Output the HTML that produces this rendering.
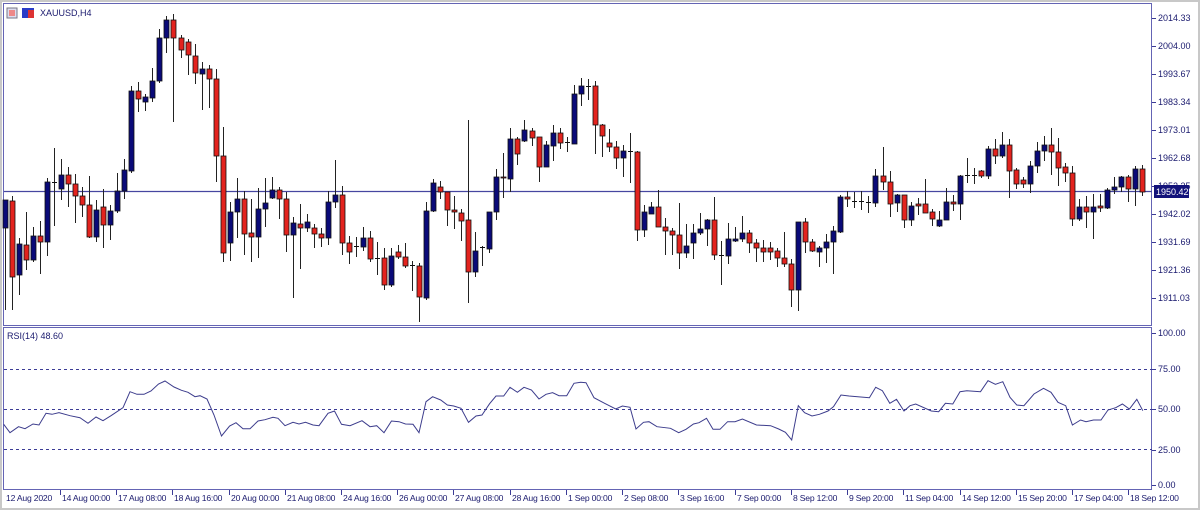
<!DOCTYPE html>
<html><head><meta charset="utf-8">
<style>
html,body{margin:0;padding:0;background:#fff;}
body{width:1200px;height:510px;overflow:hidden;position:relative;font-family:"Liberation Sans",Tahoma,sans-serif;}
svg{position:absolute;left:0;top:0;}
text{font-family:"Liberation Sans",Tahoma,sans-serif;font-size:9px;fill:#1a1a6e;}
text.t{font-size:8.6px;letter-spacing:-0.2px;}
</style></head><body>
<svg id="s" width="1200" height="510" xmlns="http://www.w3.org/2000/svg">
<rect x="0" y="0" width="1200" height="510" fill="#fff"/>
<rect x="0.5" y="0.5" width="1199" height="509" fill="none" stroke="#c8c8c8" stroke-width="3"/>
<g id="frames" fill="none" stroke="#6464b4" stroke-width="1">
<rect x="3.5" y="3.5" width="1148" height="322"/>
<rect x="3.5" y="327.5" width="1148" height="162"/>
</g>
<g stroke="#3c3c96" stroke-width="1" stroke-dasharray="3,3">
<line x1="4" y1="369.5" x2="1152" y2="369.5"/>
<line x1="4" y1="409.5" x2="1152" y2="409.5"/>
<line x1="4" y1="449.5" x2="1152" y2="449.5"/>
</g>
<line x1="4" y1="191.5" x2="1152" y2="191.5" stroke="#4646a0" stroke-width="1.2"/>
<g id="candles"></g>
<polyline id="rsi" fill="none" stroke="#3c3c8c" stroke-width="1"/>
<rect x="7" y="8" width="10" height="10" fill="#dde" stroke="#778"/>
<rect x="9" y="10" width="6" height="6" fill="#e88"/>
<rect x="22" y="8" width="12" height="10" fill="#2a3cc8"/>
<rect x="28" y="10" width="6" height="8" fill="#d33"/>
<text x="40" y="16" font-size="9">XAUUSD,H4</text>
<text x="7" y="339">RSI(14) 48.60</text>
<g id="axis"></g>
<rect x="1154" y="185" width="35" height="13" fill="#12127a"/>
<text x="1156" y="195" style="fill:#fff">1950.42</text>
</svg>
<script>
var D=[
[200,310,200,228,'b'],[196,310,201,277,'r'],[238,295,244,275,'b'],[212,270,245,260,'r'],[227,262,236,260,'b'],
[221,274,236,242,'r'],[178,256,182,242,'b'],[148,226,182,183,'d'],[159,200,175,189,'b'],[167,207,175,184,'r'],
[174,223,184,196,'r'],[187,217,196,205,'r'],[176,238,205,237,'r'],[200,242,210,237,'b'],[189,248,207,225,'r'],
[205,240,211,225,'b'],[173,213,191,211,'b'],[159,199,170,191,'b'],[86,173,91,171,'b'],[82,112,91,99,'r'],
[94,111,97,102,'b'],[68,102,81,98,'b'],[29,83,38,81,'b'],[16,53,20,38,'b'],[14,122,20,38,'r'],
[35,58,38,50,'r'],[39,75,42,55,'r'],[44,84,56,73,'r'],[62,110,69,74,'b'],[65,108,69,79,'r'],
[69,182,79,156,'r'],[127,262,156,253,'r'],[202,261,212,243,'b'],[178,238,199,212,'b'],[191,255,199,234,'r'],
[199,262,233,237,'r'],[188,258,209,237,'b'],[178,227,203,209,'b'],[177,199,190,198,'b'],[187,219,190,199,'r'],
[192,252,199,235,'r'],[217,298,223,235,'b'],[204,269,224,228,'r'],[214,232,222,228,'b'],[224,248,228,234,'r'],
[228,247,234,238,'r'],[191,245,202,238,'b'],[160,208,195,202,'b'],[186,255,195,243,'r'],[236,264,243,252,'r'],
[237,257,246,247,'d'],[227,251,238,247,'b'],[231,262,238,259,'r'],[242,275,258,259,'d'],[248,290,258,285,'r'],
[248,287,256,285,'b'],[245,259,252,257,'r'],[243,268,257,266,'r'],[261,291,265,266,'d'],[263,322,266,297,'r'],
[202,300,211,298,'b'],[179,212,183,211,'b'],[181,199,187,192,'r'],[192,226,192,210,'r'],[196,229,210,212,'r'],
[209,241,213,221,'r'],[120,303,220,272,'r'],[232,277,251,272,'b'],[246,266,247,248,'d'],[212,253,212,249,'b'],
[169,220,177,212,'b'],[153,198,177,178,'r'],[128,192,139,179,'b'],[137,165,139,154,'r'],[120,142,130,141,'b'],
[128,146,131,138,'r'],[137,182,137,167,'r'],[141,167,145,167,'b'],[125,161,133,146,'b'],[128,149,133,143,'r'],
[137,152,142,143,'d'],[85,144,94,144,'b'],[78,106,86,94,'b'],[79,100,86,87,'d'],[81,154,86,125,'r'],
[124,157,125,136,'r'],[129,152,143,147,'r'],[141,169,147,158,'r'],[145,177,151,158,'b'],[133,183,151,152,'d'],
[151,241,152,230,'r'],[205,237,212,230,'b'],[202,214,207,214,'b'],[190,227,207,227,'r'],[218,255,227,231,'r'],
[228,255,231,235,'r'],[203,269,235,253,'r'],[224,258,246,253,'b'],[224,259,233,243,'b'],[213,235,229,233,'b'],
[219,246,220,229,'b'],[197,260,220,255,'r'],[241,285,255,256,'d'],[223,264,239,256,'b'],[227,242,239,241,'b'],
[216,242,233,239,'b'],[230,253,233,243,'r'],[239,262,243,248,'r'],[240,262,248,252,'r'],[242,260,248,252,'r'],
[248,267,251,258,'r'],[232,267,258,264,'r'],[259,307,264,290,'r'],[222,311,222,290,'b'],[218,253,222,242,'r'],
[239,252,242,251,'r'],[246,267,248,252,'b'],[234,263,242,248,'b'],[226,274,231,242,'b'],[195,233,197,232,'b'],
[191,207,197,199,'r'],[192,208,201,202,'d'],[191,210,201,202,'d'],[196,213,202,203,'d'],[169,207,176,203,'b'],
[147,190,176,182,'r'],[171,217,182,204,'r'],[194,212,195,203,'b'],[195,228,195,220,'r'],[202,226,206,220,'b'],
[198,215,204,206,'r'],[179,213,204,213,'r'],[209,226,212,219,'r'],[211,227,220,226,'b'],[188,220,202,220,'b'],
[195,211,202,204,'r'],[175,220,176,204,'b'],[158,183,175,176,'d'],[168,184,175,176,'d'],[170,178,171,176,'r'],
[146,179,149,176,'b'],[139,164,149,156,'r'],[132,158,145,156,'b'],[139,198,145,171,'r'],[168,189,170,184,'r'],
[177,188,180,184,'r'],[161,193,166,184,'b'],[142,173,151,166,'b'],[136,161,145,151,'b'],[128,175,145,152,'r'],
[138,186,152,168,'r'],[163,182,167,173,'r'],[166,226,173,219,'r'],[199,221,207,219,'b'],[196,228,207,212,'r'],
[194,239,207,212,'b'],[194,212,206,208,'r'],[188,209,190,208,'b'],[177,194,187,190,'b'],[176,192,177,187,'b'],
[175,202,177,189,'r'],[166,206,169,189,'b'],[165,196,169,192,'r']];
var g='';
D.forEach(function(c,i){
 var x=Math.round(5+7.02*i);
 g+='<line x1="'+(x+0.5)+'" y1="'+c[0]+'" x2="'+(x+0.5)+'" y2="'+c[1]+'" stroke="#222" stroke-width="1"/>';
 var h=Math.max(1,c[3]-c[2]);
 if(c[4]=='d'){g+='<line x1="'+(x-2)+'" y1="'+(c[2]+0.5)+'" x2="'+(x+3)+'" y2="'+(c[2]+0.5)+'" stroke="#111"/>';}
 else{var f=c[4]=='b'?'#0a0a78':'#e3231e';
 g+='<rect x="'+(x-2)+'" y="'+c[2]+'" width="5" height="'+h+'" fill="'+f+'" stroke="#111" stroke-width="0.8"/>';}
});
document.getElementById('candles').innerHTML=g;
var R=[[3.7,424.3],[10,432.7],[18.5,426.7],[25,428.7],[33,424],[39,425],[46,413.3],[52,414.3],[59,412.7],[70,415.7],[80,417.7],[88,423.3],[96,417],[103,420.7],[111,415.7],[123,407.7],[130,391.7],[137,394.3],[144,394.3],[151,391],[158.5,384],[165,381],[174,387],[181.5,390.3],[188,392.3],[195,396.7],[200,395.7],[207,399],[214,415],[221.5,436],[229.6,426],[236,422.7],[243,428.7],[250,428.7],[258,421],[265,419.7],[273,417.3],[278,418.3],[285,425.7],[293,422.3],[299,424],[305.5,422.3],[313,425],[319,425.7],[328,413.3],[334.5,411],[341.5,424.3],[350,425.7],[362,420.7],[370,426.7],[376.7,425.7],[384,432.7],[391.5,421],[399,421.7],[405.5,424],[413,424.3],[419,432.7],[426,401.7],[432.6,396.7],[440.7,400],[447.4,405],[453.7,406],[461,408.3],[468.5,422.3],[476,416],[482,415],[489.6,403.7],[496,396],[503.7,396],[510,387.3],[517.4,392.3],[524,387.3],[531.5,390],[539,399],[546,394.3],[552.6,392.7],[559,395.7],[566.7,395.7],[574,383.3],[580.7,382.3],[586,382.7],[594,397.7],[604.6,403.3],[615.7,409],[622.4,406],[630,407.3],[636,429],[643.5,422.3],[649,421.7],[657,426.7],[670.5,428.3],[678.7,432.7],[686,429.3],[693.5,424],[699,422.7],[706.5,418.3],[713,429.3],[720,429.3],[727.6,421.7],[735,421.7],[742.4,419],[756.5,425],[770.6,425.7],[778.7,429],[785.4,432.3],[791.7,440],[798.3,405.7],[804.6,412.7],[812,416],[819.4,414.3],[828,411],[833.5,406.7],[841,395],[849,396],[869.4,397.7],[875.7,387.3],[882.4,390.7],[889.8,403.3],[896.5,399.3],[904,411],[910,405.7],[915.7,404],[931.3,411],[938.7,411.7],[945.4,403.3],[952.8,404],[960,391.7],[966.8,390.7],[980.5,391.7],[988,380.7],[995.4,384.3],[1002.8,381.7],[1010,397.3],[1016.8,405],[1023.9,405.7],[1034,394],[1043.5,388.3],[1051,392.3],[1058,402.3],[1065.7,405.7],[1072.4,425],[1080.6,420],[1086,421.7],[1093.5,420],[1101,420],[1108,410],[1115.7,407.7],[1122.4,404],[1129.4,409],[1136.8,399.3],[1142.8,410.7]];
document.getElementById('rsi').setAttribute('points',R.map(function(p){return p.join(',')}).join(' '));
var a='';
var P=[['2014.33',18],['2004.00',46],['1993.67',74],['1983.34',102],['1973.01',130],['1962.68',158],['1952.35',186],['1942.02',214],['1931.69',242],['1921.36',270],['1911.03',298]];
P.forEach(function(p){a+='<line x1="1152" y1="'+(p[1]+0.5)+'" x2="1156" y2="'+(p[1]+0.5)+'" stroke="#3c3c96"/><text x="1158" y="'+(p[1]+3)+'">'+p[0]+'</text>';});
var Q=[['100.00',333],['75.00',369],['50.00',409],['25.00',450],['0.00',485]];
Q.forEach(function(p){a+='<line x1="1152" y1="'+(p[1]+0.5)+'" x2="1156" y2="'+(p[1]+0.5)+'" stroke="#3c3c96"/><text x="1158" y="'+(p[1]+3)+'">'+p[0]+'</text>';});
var T=[['12 Aug 2020',4],['14 Aug 00:00',60],['17 Aug 08:00',116],['18 Aug 16:00',172],['20 Aug 00:00',229],['21 Aug 08:00',285],['24 Aug 16:00',341],['26 Aug 00:00',397],['27 Aug 08:00',453],['28 Aug 16:00',510],['1 Sep 00:00',566],['2 Sep 08:00',622],['3 Sep 16:00',678],['7 Sep 00:00',735],['8 Sep 12:00',791],['9 Sep 20:00',847],['11 Sep 04:00',903],['14 Sep 12:00',960],['15 Sep 20:00',1016],['17 Sep 04:00',1072],['18 Sep 12:00',1128]];
T.forEach(function(t,i){if(i>0)a+='<line x1="'+(t[1]+0.5)+'" y1="490" x2="'+(t[1]+0.5)+'" y2="495" stroke="#3c3c96"/>';a+='<text class="t" x="'+(t[1]+2)+'" y="501">'+t[0]+'</text>';});
document.getElementById('axis').innerHTML=a;
</script>
</body></html>
